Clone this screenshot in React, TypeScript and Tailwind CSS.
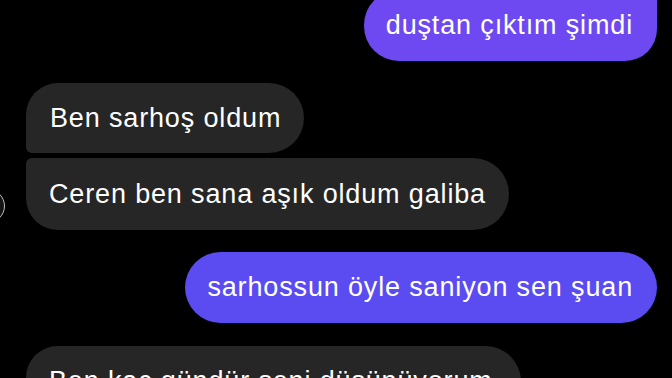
export default function App() {
  const font = { fontFamily: '"Liberation Sans", Arial, sans-serif' };
  return (
    <div className="w-[672px] h-[378px] bg-black overflow-hidden" style={font}>
      <div className="flex flex-col -mt-[10px]">
        {/* bubble 1 - sent */}
        <div className="flex justify-end pr-[15px]">
          <div className="h-[71px] flex items-center pl-[22px] pr-[24px] bg-[#6e49f1] text-white text-[27px] tracking-[0.85px] rounded-tl-[35px] rounded-bl-[35px] rounded-tr-[8px] rounded-br-[32px] whitespace-nowrap">
            duştan çıktım şimdi
          </div>
        </div>

        {/* bubble 2 - received */}
        <div className="flex pl-[26px] mt-[22px]">
          <div className="h-[70px] flex items-center pl-[24px] pr-[23px] bg-[#262626] text-white text-[27px] tracking-[0.85px] rounded-tl-[32px] rounded-bl-[6px] rounded-tr-[35px] rounded-br-[35px] whitespace-nowrap">
            Ben sarhoş oldum
          </div>
        </div>

        {/* bubble 3 - received with avatar */}
        <div className="flex mt-[5px]">
          <div className="w-[34px] h-[34px] -ml-[29px] mr-[21px] self-end mb-[7px] rounded-full border-[1.5px] border-[#bdbdbd] bg-[#141414] shrink-0" />
          <div className="h-[72px] flex items-center pl-[23px] pr-[23px] bg-[#262626] text-white text-[27px] tracking-[0.85px] rounded-tl-[6px] rounded-bl-[32px] rounded-tr-[36px] rounded-br-[36px] whitespace-nowrap">
            Ceren ben sana aşık oldum galiba
          </div>
        </div>

        {/* bubble 4 - sent */}
        <div className="flex justify-end pr-[15px] mt-[22px]">
          <div className="h-[71px] flex items-center pl-[22px] pr-[24px] bg-[#5b4cf1] text-white text-[27px] tracking-[0.85px] rounded-[36px] whitespace-nowrap">
            sarhossun öyle saniyon sen şuan
          </div>
        </div>

        {/* bubble 5 - received */}
        <div className="flex pl-[26px] mt-[23px]">
          <div className="h-[71px] flex items-center pl-[23px] pr-[28px] bg-[#262626] text-white text-[27px] tracking-[0.85px] rounded-tl-[32px] rounded-bl-[6px] rounded-tr-[36px] rounded-br-[36px] whitespace-nowrap">
            Ben kaç gündür seni düşünüyorum
          </div>
        </div>
      </div>
    </div>
  );
}
